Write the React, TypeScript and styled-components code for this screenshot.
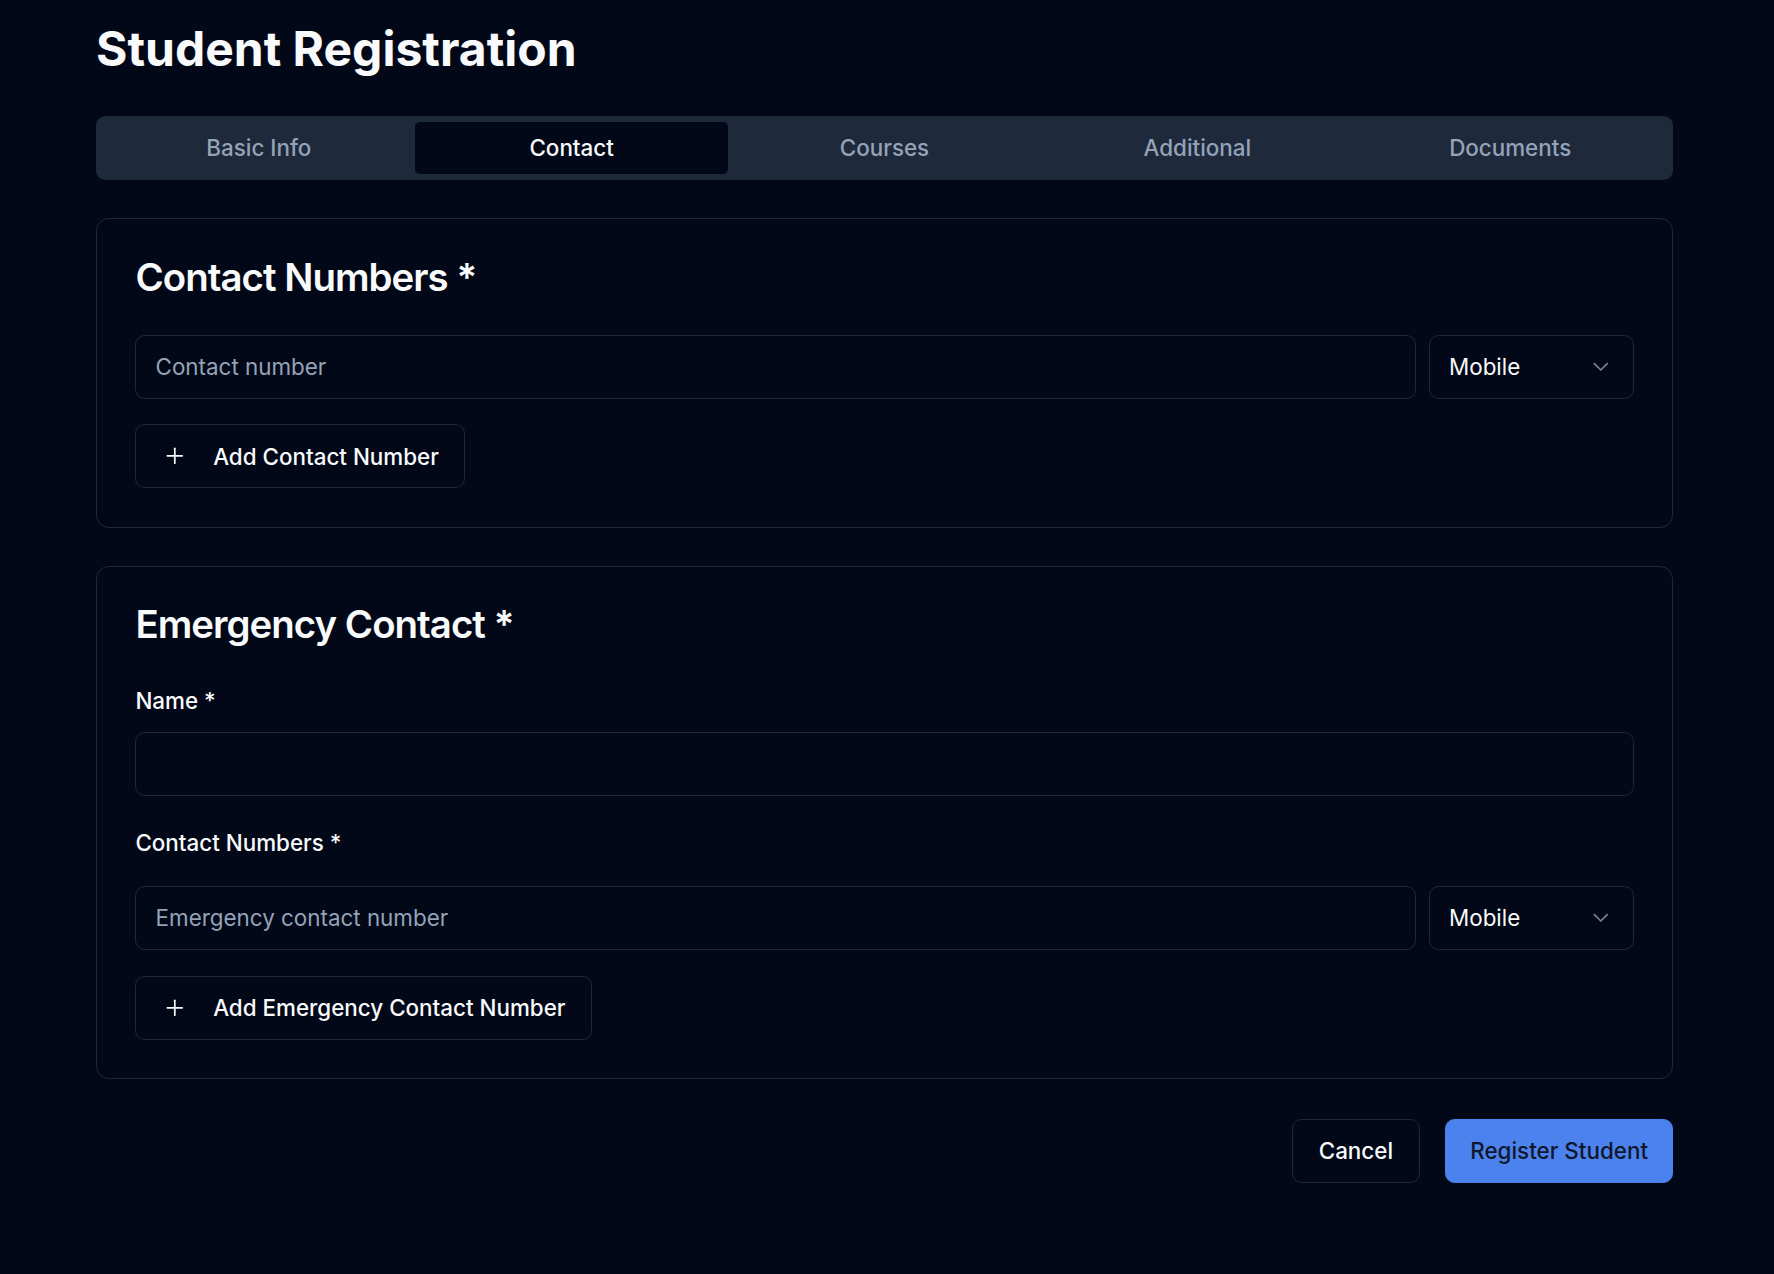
import React from "react";
import styled, { createGlobalStyle } from "styled-components";
import { ChevronDown, Plus } from "lucide-react";

const GlobalStyle = createGlobalStyle`
  html, body {
    margin: 0;
    padding: 0;
    background: #020817;
    color: #f8fafc;
    font-family: Inter, "Noto Sans", "Liberation Sans", sans-serif;
  }
  * { box-sizing: border-box; }
`;

const Page = styled.div`
  min-height: 1274px;
  padding: 20px 0 60px 96px;
`;

const Container = styled.div`
  width: 1577px;
  display: flex;
  flex-direction: column;
`;

const Title = styled.h1`
  margin: 0 0 38.4px;
  font-size: 48px;
  line-height: 57.6px;
  font-weight: 700;
  color: #f8fafc;
`;

const TabList = styled.div`
  display: grid;
  grid-template-columns: repeat(5, 1fr);
  height: 64px;
  padding: 6.4px;
  background: #1e293b;
  border-radius: 9.6px;
  margin-bottom: 38.4px;
`;

const Tab = styled.button<{ $active?: boolean }>`
  border: none;
  border-radius: 4.8px;
  font-family: inherit;
  font-size: 22.4px;
  font-weight: 500;
  line-height: 32px;
  background: ${(p) => (p.$active ? "#020817" : "transparent")};
  color: ${(p) => (p.$active ? "#f8fafc" : "#94a3b8")};
  cursor: pointer;
`;

const Cards = styled.div`
  display: flex;
  flex-direction: column;
  gap: 38.4px;
`;

const Card = styled.section`
  border: 1px solid #1e293b;
  border-radius: 12.8px;
  background: #020817;
`;

const CardHeader = styled.div`
  padding: 38.4px;
`;

const CardTitle = styled.h2`
  margin: 0;
  font-size: 38.4px;
  line-height: 38.4px;
  font-weight: 600;
  letter-spacing: -0.025em;
  color: #f8fafc;
`;

const CardBody = styled.div`
  padding: 0 38.4px 38.4px;
  display: flex;
  flex-direction: column;
`;

const FieldLabel = styled.label<{ $top: number; $bottom: number }>`
  display: block;
  font-size: 22.4px;
  line-height: 22.4px;
  font-weight: 500;
  color: #f8fafc;
  margin-top: ${(p) => p.$top}px;
  margin-bottom: ${(p) => p.$bottom}px;
`;

const Row = styled.div`
  display: flex;
  gap: 12.8px;
`;

const TextInput = styled.input<{ $grow?: boolean }>`
  flex: ${(p) => (p.$grow ? "1 1 0" : "none")};
  width: ${(p) => (p.$grow ? "auto" : "100%")};
  min-width: 0;
  height: 64px;
  padding: 0 19.2px;
  border: 1px solid #1e293b;
  border-radius: 9.6px;
  background: #020817;
  color: #f8fafc;
  font-family: inherit;
  font-size: 22.4px;
  outline: none;
  &::placeholder {
    color: #94a3b8;
  }
`;

const SelectTrigger = styled.button`
  flex: none;
  width: 204.8px;
  height: 64px;
  padding: 0 19.2px;
  display: flex;
  align-items: center;
  justify-content: space-between;
  border: 1px solid #1e293b;
  border-radius: 9.6px;
  background: #020817;
  color: #f8fafc;
  font-family: inherit;
  font-size: 22.4px;
  cursor: pointer;
  svg {
    opacity: 0.5;
  }
`;

const Button = styled.button<{ $variant?: "outline" | "primary" }>`
  height: 64px;
  padding: 0 ${(p) => (p.$variant === "primary" ? "24px" : "25.6px")};
  display: inline-flex;
  align-items: center;
  gap: 25.6px;
  border-radius: 9.6px;
  border: 1px solid ${(p) => (p.$variant === "primary" ? "#4c82ed" : "#1e293b")};
  background: ${(p) => (p.$variant === "primary" ? "#4c82ed" : "#020817")};
  color: ${(p) => (p.$variant === "primary" ? "#0f172a" : "#f8fafc")};
  font-family: inherit;
  font-size: 22.4px;
  font-weight: 500;
  white-space: nowrap;
  cursor: pointer;
`;

const AddButton = styled(Button)`
  align-self: flex-start;
  margin-top: 25.6px;
`;

const Footer = styled.div`
  display: flex;
  justify-content: flex-end;
  gap: 25.6px;
  margin-top: 40px;
`;

const tabs = ["Basic Info", "Contact", "Courses", "Additional", "Documents"];

function PhoneRow({ placeholder }: { placeholder: string }) {
  return (
    <Row>
      <TextInput $grow placeholder={placeholder} />
      <SelectTrigger type="button">
        <span>Mobile</span>
        <ChevronDown size={25.6} strokeWidth={1.6} />
      </SelectTrigger>
    </Row>
  );
}

export default function App() {
  return (
    <>
      <GlobalStyle />
      <Page>
        <Container>
          <Title>Student Registration</Title>
          <TabList>
            {tabs.map((t) => (
              <Tab key={t} $active={t === "Contact"}>
                {t}
              </Tab>
            ))}
          </TabList>
          <Cards>
            <Card>
              <CardHeader>
                <CardTitle>Contact Numbers *</CardTitle>
              </CardHeader>
              <CardBody>
                <PhoneRow placeholder="Contact number" />
                <AddButton $variant="outline" type="button">
                  <Plus size={25.6} strokeWidth={1.6} />
                  Add Contact Number
                </AddButton>
              </CardBody>
            </Card>
            <Card>
              <CardHeader>
                <CardTitle>Emergency Contact *</CardTitle>
              </CardHeader>
              <CardBody>
                <FieldLabel $top={8} $bottom={19.5}>
                  Name *
                </FieldLabel>
                <TextInput />
                <FieldLabel $top={35.5} $bottom={32}>
                  Contact Numbers *
                </FieldLabel>
                <PhoneRow placeholder="Emergency contact number" />
                <AddButton $variant="outline" type="button">
                  <Plus size={25.6} strokeWidth={1.6} />
                  Add Emergency Contact Number
                </AddButton>
              </CardBody>
            </Card>
          </Cards>
          <Footer>
            <Button $variant="outline" type="button">
              Cancel
            </Button>
            <Button $variant="primary" type="button">
              Register Student
            </Button>
          </Footer>
        </Container>
      </Page>
    </>
  );
}
